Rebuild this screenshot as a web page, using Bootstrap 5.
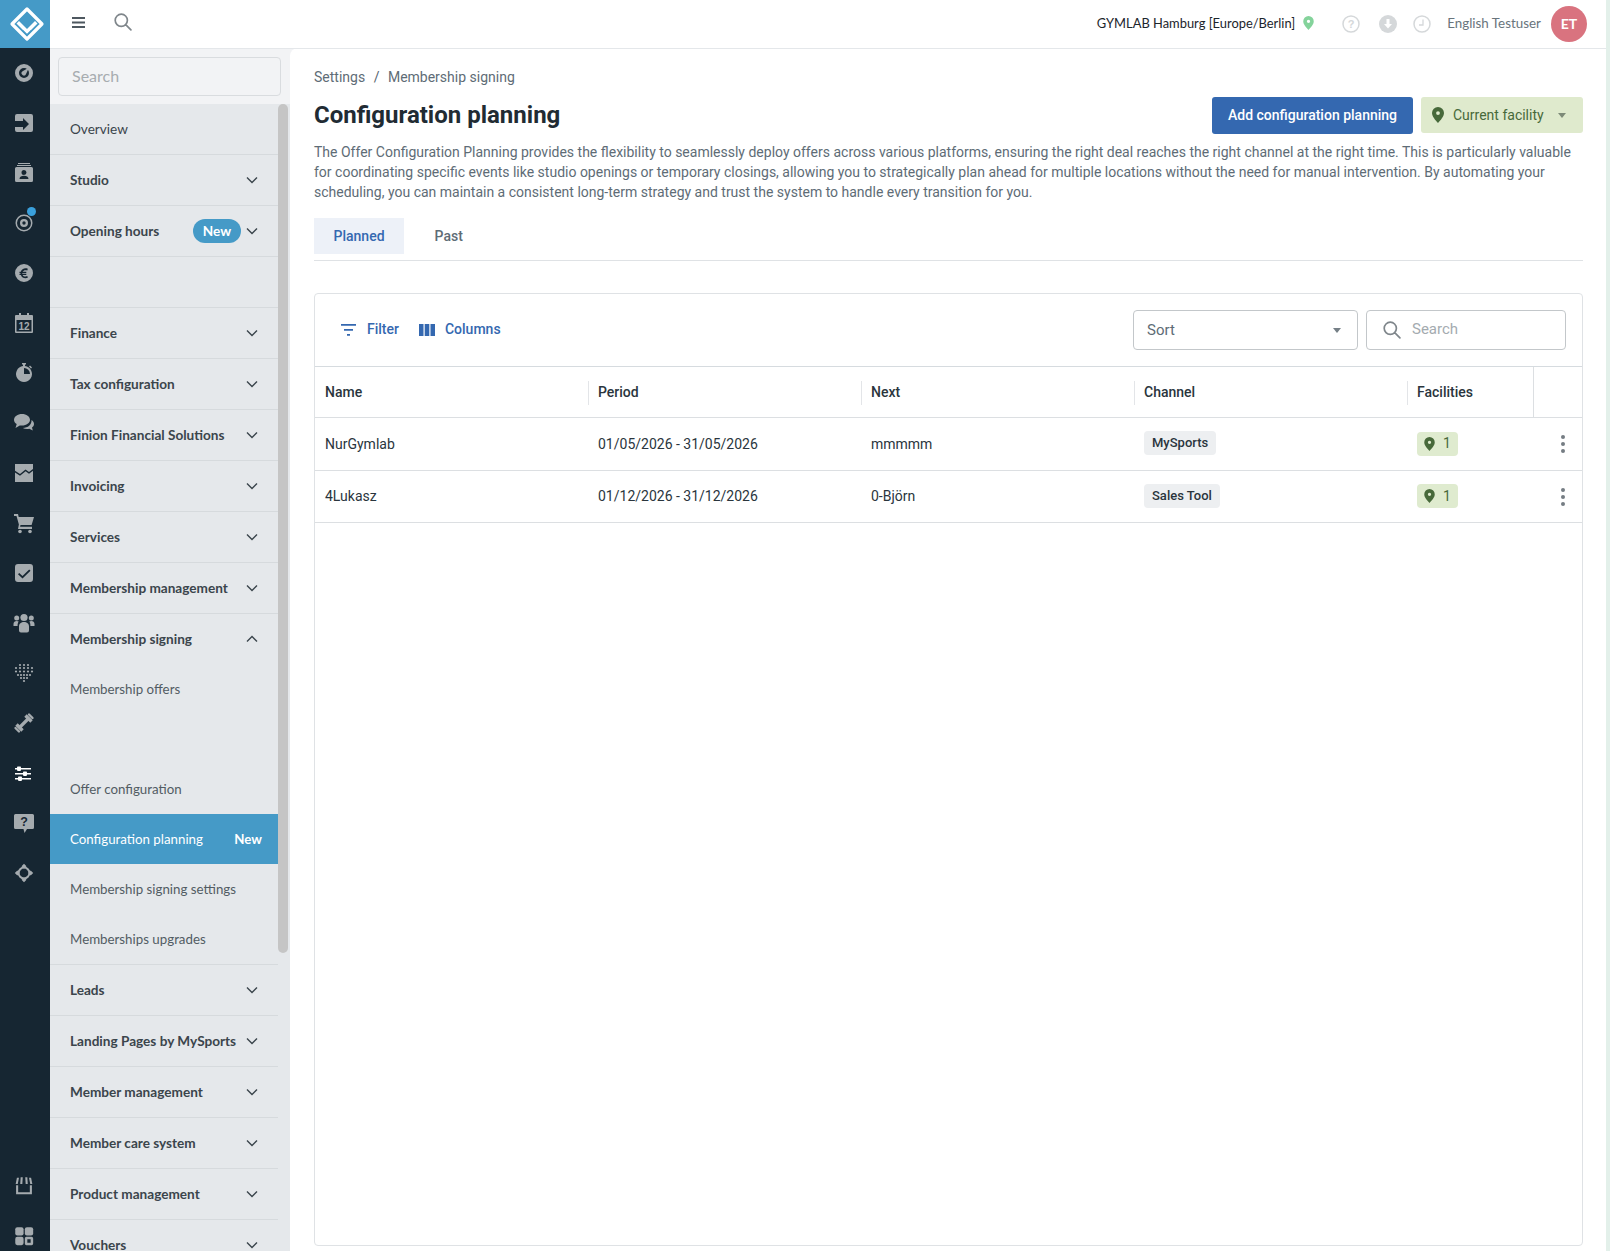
<!DOCTYPE html>
<html lang="en">
<head>
<meta charset="UTF-8">
<title>Configuration planning</title>
<link href="https://cdn.jsdelivr.net/npm/bootstrap@5.3.0/dist/css/bootstrap.min.css" rel="stylesheet">
<style>
html, body { height: 1251px; overflow: hidden; }
body { background: #f2f3f5; font-family: Lato, "Noto Sans", sans-serif; color: #2a353d; display: flex; }
.rail { width: 50px; flex: none; height: 1251px; background: #162632; display: flex; flex-direction: column; }
.rail-logo { height: 48px; background: #459ac7; display: flex; align-items: center; justify-content: center; }
.rail-logo svg { margin-left: 3px; margin-top: -1px; }
.rail-list { display: flex; flex-direction: column; flex: 1; }
.rail-item { height: 50px; display: flex; align-items: center; justify-content: center; position: relative; flex: none; }
.rail-item svg { width: 24px; height: 24px; fill: #a5abaf; margin-right: 2px; }
.rail-item.tight svg { width: 20px; height: 20px; }
.rail-item.on svg { fill: #fff; }
.rail-item.last { margin-bottom: -10px; }
.rail-dot { position: absolute; width: 9px; height: 9px; border-radius: 50%; background: #3aa0dc; left: 27px; top: 9px; }
.rail-foot { margin-top: auto; }
.shell { flex: 1; min-width: 0; display: flex; flex-direction: column; border-right: 4px solid #e3f0ea; }
.topbar { height: 49px; margin-bottom: -1px; position: relative; z-index: 1; background: #fff; border-bottom: 1px solid #e4e7ea; padding: 0 19px 0 22px; flex: none; }
.top-menu { margin-top: -4px; }
.top-find { margin-left: 29px; margin-top: -4px; color: #7f868b; }
.top-place { font-size: 12.900px; color: #1c252c; margin-top: -1px; }
.top-user { font-size: 13.400px; color: #69747c; margin-left: 16px; margin-top: -1px; }
.avatar { width: 36px; height: 36px; border-radius: 50%; background: #d9737f; color: #fff; font-weight: 700; font-size: 14px; margin-left: 10px; margin-top: -1px; }
.top-ico-1 { margin-left: 28px; }
.top-ico-2 { margin-left: 19px; }
.top-ico-3 { margin-left: 16px; }
.middle { flex: 1; display: flex; min-height: 0; }
.side { width: 240px; flex: none; display: flex; flex-direction: column; }
.side-search { height: 56px; padding: 9px 9px 8px 8px; flex: none; }
.side-search .form-control { height: 39px; background: #f2f3f5; border: 1px solid #d9dcdf; border-radius: 4px; font-size: 16px; padding: 0 13px 2px; color: #7d858b; }
.side-search .form-control::placeholder { color: #a7acb0; }
.side-body { flex: 1; background: #e5e8eb; position: relative; overflow: hidden; }
.side-thumb { position: absolute; right: 2px; top: 0; width: 10px; height: 849px; background: #c5c5c5; border-radius: 5px; }
.side-menu { width: 228px; }
.side-row { height: 51px; border-bottom: 1px solid #d6dadd; padding: 0 20px; font-size: 13.600px; font-weight: 700; color: #3b454c; display: flex; align-items: center; justify-content: space-between; }
.side-row.plain { font-weight: 400; }
.side-row.noline { border-bottom: 0; height: 50px; }
.side-row.rule { height: 1px; padding: 0; }
.side-sub { height: 50px; padding: 2px 16px 0 20px; font-size: 13.300px; color: #525c63; display: flex; align-items: center; justify-content: space-between; }
.side-sub.on { background: #459ac7; color: #fff; }
.side-sub.on b { font-weight: 700; font-size: 13.300px; }
.chev { width: 12px; height: 8px; fill: none; stroke: #3b454c; stroke-width: 1.4; flex: none; }
.new-pill { background: #459ac7; color: #fff; font-size: 13.600px; font-weight: 700; border-radius: 12px; width: 48px; text-align: center; line-height: 24px; margin-left: auto; margin-right: 5px; }
.main { flex: 1; min-width: 0; background: #fff; border-top-left-radius: 8px; padding: 19px 23px 5px 24px; font-family: Roboto, sans-serif; display: flex; flex-direction: column; }
.crumbs { margin: 0 0 10px; --bs-breadcrumb-divider-color: #56646e; --bs-breadcrumb-item-active-color: #5e6c76; font-size: 14px; color: #5e6c76; line-height: 20px; --bs-breadcrumb-item-padding-x: 8.500px; }
.crumbs a { color: #5e6c76; text-decoration: none; }
.head-row { height: 37px; }
.page-title { font-size: 24px; font-weight: 700; color: #212b33; margin: 0; font-family: Roboto, sans-serif; }
.btn-add { background: #3468b0; border: 0; color: #fff; font-size: 14px; font-weight: 500; height: 37px; width: 201px; padding: 0; border-radius: 3px; }
.btn-facility { background: #dfeacd; border: 0; color: #47693a; font-size: 14px; height: 36px; width: 162px; padding: 0 17px 0 11px; border-radius: 3px; display: flex; align-items: center; }
.btn-facility svg { margin-right: 9px; }
.btn-facility:after { content: ""; margin-left: auto; border-left: 4.500px solid transparent; border-right: 4.500px solid transparent; border-top: 5px solid #7d8a78; }
.intro { font-size: 14px; line-height: 20px; color: #5e6c76; margin: 8px 0 16px; }
.tabs-line { border-bottom: 1px solid #dfe2e5; padding-bottom: 6px; gap: 11px; margin-bottom: 32px; flex: none; }
.tabs-line .nav-link { height: 36px; padding: 0 19.500px; line-height: 36px; font-size: 14px; font-weight: 500; color: #5e6c76; border-radius: 0; }
.tabs-line .nav-link.active { background: #edf1f8; color: #3468b0; }
.tbl-card { flex: 1; border: 1px solid #dfe2e5; border-radius: 4px; min-height: 0; }
.tbl-tools { height: 73px; padding: 0 16px 1px 26px; border-bottom: 1px solid #d6dbdf; }
.tool-link { color: #3468b0; font-weight: 500; font-size: 14px; text-decoration: none; display: flex; align-items: center; gap: 11px; }
.tool-link svg { fill: #3468b0; }
.tool-link + .tool-link { gap: 10px; margin-left: 20px; }
.sort-box { width: 225px; height: 40px; font-size: 15px; color: #5e6c76; border: 1px solid #c3c7ca; border-radius: 4px; padding: 2px 13px 0; display: flex; align-items: center; justify-content: space-between; }
.sort-box:after { content: ""; border-left: 4.500px solid transparent; border-right: 4.500px solid transparent; border-top: 5px solid #757f86; margin-right: 3px; }
.find-box { width: 200px; height: 40px; border: 1px solid #c3c7ca; border-radius: 4px; padding: 0 16px; gap: 11px; }
.find-box input { border: 0; outline: 0; padding: 0; font-size: 15px; width: 130px; background: transparent; }
.find-box input::placeholder { color: #a4abb0; }
.find-box svg { color: #7f868b; }
.grid-tbl { table-layout: fixed; width: 100%; margin: 0; --bs-table-color: #2a353d; font-size: 14px; }
.grid-tbl th, .grid-tbl td { padding: 1px 10px 0; vertical-align: middle; border-bottom: 1px solid #dcdfe2; }
.grid-tbl thead th { height: 50px; font-weight: 500; position: relative; padding-top: 2px; }
.grid-tbl thead th.sep:before { content: ""; position: absolute; left: 0; top: 14px; height: 24px; width: 1px; background: #e3e5e8; }
.grid-tbl thead th.full { border-left: 1px solid #dcdfe2; }
.grid-tbl tbody tr:first-child td { height: 53px; }
.grid-tbl tbody tr:last-child td { height: 52px; }
.col-wide { width: 273px; }
.col-mid { width: 126px; }
.chan-tag { display: inline-block; background: #edeff1; border-radius: 4px; font-size: 13px; font-weight: 500; line-height: 24px; padding: 0 8px; position: relative; top: -1px; }
.fac-tag { display: inline-flex; align-items: center; gap: 8px; background: #dfebcf; color: #47693a; border-radius: 4px; height: 24px; width: 41px; padding-left: 7px; font-size: 14px; }
.dots { display: flex; flex-direction: column; gap: 3px; width: 4px; margin-left: 18px; }
.dots i { width: 4px; height: 4px; border-radius: 50%; background: #757d83; }
</style>
</head>
<body>
<svg width="0" height="0" class="position-absolute">
  <symbol id="chev-down" viewBox="0 0 12 8"><path d="M1 1.500l5 5 5-5"/></symbol>
  <symbol id="chev-up" viewBox="0 0 12 8"><path d="M1 6.500l5-5 5 5"/></symbol>
  <symbol id="pin" viewBox="0 0 12 16"><path fill-rule="evenodd" d="M6 0a6 6 0 0 1 6 6c0 3.600-3.600 7.400-6 10C3.600 13.400 0 9.600 0 6a6 6 0 0 1 6-6zm0 4.200a1.900 1.900 0 1 0 0 3.800 1.900 1.900 0 0 0 0-3.800z"/></symbol>
  <symbol id="loupe" viewBox="0 0 18 18"><path fill="none" stroke="currentColor" stroke-width="1.700" stroke-linecap="round" d="M7.300 1.200a6.100 6.100 0 1 1 0 12.200 6.100 6.100 0 0 1 0-12.200zM11.700 11.700l5.200 5.200"/></symbol>
</svg>

<nav class="rail">
  <div class="rail-logo">
    <svg width="36" height="36" viewBox="0 0 36 36"><path fill="none" stroke="#fff" stroke-width="3.200" stroke-linejoin="round" d="M18 3l15 15-15 15L3 18z"/><path fill="#fff" d="M10 15l8 8 8-8 2.500 2.500L18 28 7.500 17.500z"/><path fill="#459ac7" d="M14 24l4 4 4-4 1 1-5 5-5-5z"/></svg>
  </div>
  <div class="rail-list">
    <div class="rail-item"><svg viewBox="0 0 24 24"><path fill-rule="evenodd" d="M12 3a9 9 0 1 1 0 18 9 9 0 0 1 0-18zm0 4a5 5 0 1 0 0 10 5 5 0 0 0 0-10z"/><path d="M17 6.500l-6.400 3.700a2.300 2.300 0 1 0 3.200 3.200z"/></svg></div>
    <div class="rail-item"><svg viewBox="0 0 24 24"><path fill-rule="evenodd" d="M5 3h14a2 2 0 0 1 2 2v14a2 2 0 0 1-2 2H5a2 2 0 0 1-2-2v-3h8v3l6-6-6-6v3H3V5a2 2 0 0 1 2-2z"/></svg></div>
    <div class="rail-item"><svg viewBox="0 0 24 24"><path d="M6 2h12v1H6zM5 4h14v1H5z"/><path fill-rule="evenodd" d="M4.500 6h15A1.500 1.500 0 0 1 21 7.500v12a1.500 1.500 0 0 1-1.500 1.500h-15A1.500 1.500 0 0 1 3 19.500v-12A1.500 1.500 0 0 1 4.500 6zM12 9a2.500 2.500 0 1 0 0 5 2.500 2.500 0 0 0 0-5zm-4.500 9h9c0-2-2-3.200-4.500-3.200S7.500 16 7.500 18z"/></svg></div>
    <div class="rail-item"><svg viewBox="0 0 24 24"><path fill-rule="evenodd" d="M12 3.500a8.500 8.500 0 1 1 0 17 8.500 8.500 0 0 1 0-17zm0 1.500a7 7 0 1 0 0 14 7 7 0 0 0 0-14zm0 3a4 4 0 1 1 0 8 4 4 0 0 1 0-8zm0 2.300a1.700 1.700 0 1 0 0 3.400 1.700 1.700 0 0 0 0-3.400z"/></svg><span class="rail-dot"></span></div>
    <div class="rail-item"><svg viewBox="0 0 24 24"><path fill-rule="evenodd" d="M12 3a9 9 0 1 1 0 18 9 9 0 0 1 0-18zm3.800 4.700c-3-1.200-6.200.2-7 3H7.500v1.200h1.100v.8H7.500v1.200h1.400c.9 2.800 4 4 6.900 2.800l-.5-1.600c-2 .8-4 .2-4.700-1.200h3.700v-1.200h-4v-.8h4v-1.200h-3.700c.8-1.400 2.700-2 4.700-1.200z"/></svg></div>
    <div class="rail-item"><svg viewBox="0 0 24 24"><path fill-rule="evenodd" d="M7 2h2v2h6V2h2v2h3a1 1 0 0 1 1 1v16a1 1 0 0 1-1 1H4a1 1 0 0 1-1-1V5a1 1 0 0 1 1-1h3zM4.500 9v11.500h15V9z"/><text x="12" y="19" text-anchor="middle" font-family="Liberation Sans, sans-serif" font-size="10" font-weight="700" fill="#a5abaf">12</text></svg></div>
    <div class="rail-item"><svg viewBox="0 0 24 24"><path fill-rule="evenodd" d="M10 2h4v1.500h-1v1.600a8 8 0 1 1-2 0V3.500h-1zM12 7v6h6a6 6 0 0 0-6-6zM18 4.500l2 2-1 1-2-2z"/></svg></div>
    <div class="rail-item"><svg viewBox="0 0 24 24"><path d="M10 3c4.400 0 8 2.600 8 5.800s-3.600 5.800-8 5.800c-.8 0-1.500-.1-2.200-.2L3.500 17l1.200-3.900C3 12 2 10.500 2 8.800 2 5.600 5.600 3 10 3z"/><path d="M19.500 9c1.500 1 2.500 2.400 2.500 4 0 1.400-.7 2.600-2 3.600l.8 3-3.500-1.900c-.7.200-1.500.3-2.300.3-1.600 0-3-.4-4.200-1 5.200-.1 9-3.400 8.700-8z"/></svg></div>
    <div class="rail-item"><svg viewBox="0 0 24 24"><path d="M3 3h18v5l-4 3-3.500-2.500L8 13 3 9.800zM3 11.500l5 3.200 5.600-4.400 3.400 2.500 4-3V21H3z"/></svg></div>
    <div class="rail-item"><svg viewBox="0 0 24 24"><path d="M2 3h4l.7 3H22l-2.400 8H8.500l-.4 1.800H20V18H6l.9-4.500L4.500 5H2z"/><circle cx="8" cy="20.500" r="1.800"/><circle cx="18" cy="20.500" r="1.800"/></svg></div>
    <div class="rail-item"><svg viewBox="0 0 24 24"><path fill-rule="evenodd" d="M6 3h12a3 3 0 0 1 3 3v12a3 3 0 0 1-3 3H6a3 3 0 0 1-3-3V6a3 3 0 0 1 3-3zm11.200 5.500L10.500 15l-3.300-3-1.200 1.300 4.500 4.200 8-7.700z"/></svg></div>
    <div class="rail-item"><svg viewBox="0 0 24 24"><circle cx="12" cy="6.500" r="3.600"/><circle cx="4.700" cy="7" r="2.500"/><circle cx="19.300" cy="7" r="2.500"/><path d="M1.500 15v-2c0-1.900 1.400-3 3.200-3 .8 0 1.500.2 2 .6C5.700 12 5.600 13.500 5.600 15zM22.500 15v-2c0-1.900-1.400-3-3.200-3-.8 0-1.500.2-2 .6 1 1.400 1.100 2.900 1.100 4.400zM7 19.500v-4c0-2.800 2.200-4.500 5-4.500s5 1.700 5 4.500v4a2 2 0 0 1-2 2H9a2 2 0 0 1-2-2z"/></svg></div>
    <div class="rail-item"><svg viewBox="0 0 24 24"><circle cx="8" cy="4" r="1.100"/><circle cx="12" cy="4" r="1.100"/><circle cx="16" cy="4" r="1.100"/><circle cx="4" cy="7" r="1.100"/><circle cx="8" cy="7" r="1.100"/><circle cx="12" cy="7" r="1.100"/><circle cx="16" cy="7" r="1.100"/><circle cx="20" cy="7" r="1.100"/><circle cx="4" cy="10.500" r="1.100"/><circle cx="8" cy="10.500" r="1.100"/><circle cx="12" cy="10.500" r="1.100"/><circle cx="16" cy="10.500" r="1.100"/><circle cx="20" cy="10.500" r="1.100"/><circle cx="6" cy="14" r="1.100"/><circle cx="9" cy="14" r="1.100"/><circle cx="12" cy="14" r="1.100"/><circle cx="15" cy="14" r="1.100"/><circle cx="18" cy="14" r="1.100"/><circle cx="9" cy="17" r="1.100"/><circle cx="12" cy="17" r="1.100"/><circle cx="15" cy="17" r="1.100"/><circle cx="12" cy="20" r="1.100"/></svg></div>
    <div class="rail-item"><svg viewBox="0 0 24 24"><path fill="none" stroke="#a5abaf" stroke-width="3.200" d="M8 16l8-8"/><path fill="none" stroke="#a5abaf" stroke-width="3.400" d="M13.500 4.500l6 6M4.500 13.500l6 6"/><path fill="none" stroke="#a5abaf" stroke-width="2.400" stroke-linecap="round" d="M17 3.500l3.500 3.500M3.500 17L7 20.500"/></svg></div>
    <div class="rail-item on"><svg viewBox="0 0 24 24"><path d="M3 7h16v1.400H3zM3 12h16v1.400H3zM3 17h16v1.400H3z"/><rect x="5" y="5.500" width="4" height="4.400" rx=".8"/><rect x="11" y="10.500" width="4" height="4.400" rx=".8"/><rect x="6" y="15.500" width="4" height="4.400" rx=".8"/></svg></div>
    <div class="rail-item"><svg viewBox="0 0 24 24"><path d="M3.500 3h17A1.500 1.500 0 0 1 22 4.500v12a1.500 1.500 0 0 1-1.500 1.500H15l-2.500 4-1-4H3.500A1.500 1.500 0 0 1 2 16.500v-12A1.500 1.500 0 0 1 3.500 3z"/><text x="12" y="15" text-anchor="middle" font-family="Liberation Sans, sans-serif" font-size="12.500" font-weight="700" fill="#162632">?</text></svg></div>
    <div class="rail-item tight"><svg viewBox="0 0 24 24"><circle cx="12" cy="12" r="6.500" fill="none" stroke="#a5abaf" stroke-width="2.400"/><path d="M12 1l3 3-3 3-3-3zM12 17l3 3-3 3-3-3zM1 12l3-3 3 3-3 3zM17 12l3-3 3 3-3 3z"/></svg></div>
    <div class="rail-foot"></div>
    <div class="rail-item tight"><svg viewBox="0 0 24 24"><path d="M8 1.500h2.500L10 9.500H7.500zM13.500 1.500H16l.5 8H14zM3.500 2H6L4.500 9.500H2zM18 2h2.500L22 9.500h-2.500zM2.500 11H5v8.500h14V11h2.500v11h-19z"/></svg></div>
    <div class="rail-item tight last"><svg viewBox="0 0 24 24"><rect x="1.500" y="1.500" width="10" height="10" rx="2.500"/><rect x="13" y="1.500" width="10" height="10" rx="2.500"/><rect x="1.500" y="13" width="10" height="10" rx="2.500"/><path fill-rule="evenodd" d="M15 13h6a2 2 0 0 1 2 2v6a2 2 0 0 1-2 2h-6a2 2 0 0 1-2-2v-6a2 2 0 0 1 2-2zm1 3v4h4v-4z"/></svg></div>
  </div>
</nav>

<div class="shell">
  <header class="topbar d-flex align-items-center">
    <svg class="top-menu" width="13" height="11" viewBox="0 0 13 11" fill="#4e5860"><path d="M0 0h13v2H0zM0 4.500h13v2H0zM0 9h13v2H0z"/></svg>
    <svg class="top-find" width="18" height="18"><use href="#loupe"/></svg>
    <div class="top-place ms-auto d-flex align-items-center">GYMLAB Hamburg [Europe/Berlin]
      <svg class="ms-2" width="11" height="14" fill="#84d39b"><use href="#pin"/></svg>
    </div>
    <svg class="top-ico-1" width="18" height="18" viewBox="0 0 18 18"><circle cx="9" cy="9" r="8" fill="none" stroke="#d5d8da" stroke-width="1.500"/><text x="9" y="13" text-anchor="middle" font-family="Liberation Sans, sans-serif" font-size="11" font-weight="700" fill="#d5d8da">?</text></svg>
    <svg class="top-ico-2" width="18" height="18" viewBox="0 0 18 18"><circle cx="9" cy="9" r="9" fill="#d5d8da"/><path fill="#fff" d="M7.500 4h3v5h2.500L9 13.500 5 9h2.500z"/></svg>
    <svg class="top-ico-3" width="18" height="18" viewBox="0 0 18 18"><circle cx="9" cy="9" r="8" fill="none" stroke="#d5d8da" stroke-width="1.500"/><path fill="none" stroke="#d5d8da" stroke-width="1.300" d="M10 4.500V10H6"/></svg>
    <span class="top-user">English Testuser</span>
    <span class="avatar d-flex align-items-center justify-content-center">ET</span>
  </header>

  <div class="middle">
    <aside class="side">
      <div class="side-search"><input class="form-control" type="text" placeholder="Search"></div>
      <div class="side-body">
        <div class="side-thumb"></div>
        <div class="side-menu">
          <div class="side-row plain">Overview</div>
          <div class="side-row">Studio <svg class="chev"><use href="#chev-down"/></svg></div>
          <div class="side-row"><span>Opening hours</span><span class="new-pill">New</span><svg class="chev"><use href="#chev-down"/></svg></div>
          <div class="side-row"></div>
          <div class="side-row">Finance <svg class="chev"><use href="#chev-down"/></svg></div>
          <div class="side-row">Tax configuration <svg class="chev"><use href="#chev-down"/></svg></div>
          <div class="side-row">Finion Financial Solutions <svg class="chev"><use href="#chev-down"/></svg></div>
          <div class="side-row">Invoicing <svg class="chev"><use href="#chev-down"/></svg></div>
          <div class="side-row">Services <svg class="chev"><use href="#chev-down"/></svg></div>
          <div class="side-row">Membership management <svg class="chev"><use href="#chev-down"/></svg></div>
          <div class="side-row noline">Membership signing <svg class="chev"><use href="#chev-up"/></svg></div>
          <div class="side-sub">Membership offers</div>
          <div class="side-sub"></div>
          <div class="side-sub">Offer configuration</div>
          <div class="side-sub on"><span>Configuration planning</span><b>New</b></div>
          <div class="side-sub">Membership signing settings</div>
          <div class="side-sub">Memberships upgrades</div>
          <div class="side-row rule"></div>
          <div class="side-row">Leads <svg class="chev"><use href="#chev-down"/></svg></div>
          <div class="side-row">Landing Pages by MySports <svg class="chev"><use href="#chev-down"/></svg></div>
          <div class="side-row">Member management <svg class="chev"><use href="#chev-down"/></svg></div>
          <div class="side-row">Member care system <svg class="chev"><use href="#chev-down"/></svg></div>
          <div class="side-row">Product management <svg class="chev"><use href="#chev-down"/></svg></div>
          <div class="side-row">Vouchers <svg class="chev"><use href="#chev-down"/></svg></div>
        </div>
      </div>
    </aside>

    <main class="main">
      <ol class="breadcrumb crumbs">
        <li class="breadcrumb-item"><a href="#">Settings</a></li>
        <li class="breadcrumb-item active">Membership signing</li>
      </ol>
      <div class="head-row d-flex align-items-center justify-content-between">
        <h1 class="page-title">Configuration planning</h1>
        <div class="d-flex gap-2 align-items-start">
          <button class="btn btn-add" type="button">Add configuration planning</button>
          <button class="btn btn-facility" type="button"><svg width="12" height="16" fill="#47693a"><use href="#pin"/></svg>Current facility</button>
        </div>
      </div>
      <p class="intro">The Offer Configuration Planning provides the flexibility to seamlessly deploy offers across various platforms, ensuring the right deal reaches the right channel at the right time. This is particularly valuable for coordinating specific events like studio openings or temporary closings, allowing you to strategically plan ahead for multiple locations without the need for manual intervention. By automating your scheduling, you can maintain a consistent long-term strategy and trust the system to handle every transition for you.</p>
      <ul class="nav tabs-line">
        <li class="nav-item"><a class="nav-link active" href="#">Planned</a></li>
        <li class="nav-item"><a class="nav-link" href="#">Past</a></li>
      </ul>
      <section class="tbl-card">
        <div class="tbl-tools d-flex align-items-center">
          <a class="tool-link" href="#"><svg width="15" height="12" viewBox="0 0 15 12"><path d="M0 0h15v1.700H0zM3 5h9v1.700H3zM6 10h3v1.700H6z"/></svg>Filter</a>
          <a class="tool-link" href="#"><svg width="16" height="12" viewBox="0 0 16 12"><path d="M0 0h4.500v12H0zM5.700 0h4.600v12H5.700zM11.500 0H16v12h-4.500z"/></svg>Columns</a>
          <div class="sort-box ms-auto">Sort</div>
          <div class="find-box d-flex align-items-center ms-2">
            <svg width="18" height="18"><use href="#loupe"/></svg>
            <input type="text" placeholder="Search">
          </div>
        </div>
        <table class="table grid-tbl">
          <colgroup><col class="col-wide"><col class="col-wide"><col class="col-wide"><col class="col-wide"><col class="col-mid"><col></colgroup>
          <thead>
            <tr><th>Name</th><th class="sep">Period</th><th class="sep">Next</th><th class="sep">Channel</th><th class="sep">Facilities</th><th class="full"></th></tr>
          </thead>
          <tbody>
            <tr>
              <td>NurGymlab</td><td>01/05/2026 - 31/05/2026</td><td>mmmmm</td>
              <td><span class="chan-tag">MySports</span></td>
              <td><span class="fac-tag"><svg width="11" height="14" fill="#47693a"><use href="#pin"/></svg>1</span></td>
              <td><div class="dots"><i></i><i></i><i></i></div></td>
            </tr>
            <tr>
              <td>4Lukasz</td><td>01/12/2026 - 31/12/2026</td><td>0-Björn</td>
              <td><span class="chan-tag">Sales Tool</span></td>
              <td><span class="fac-tag"><svg width="11" height="14" fill="#47693a"><use href="#pin"/></svg>1</span></td>
              <td><div class="dots"><i></i><i></i><i></i></div></td>
            </tr>
          </tbody>
        </table>
      </section>
    </main>
  </div>
</div>
</body>
</html>
